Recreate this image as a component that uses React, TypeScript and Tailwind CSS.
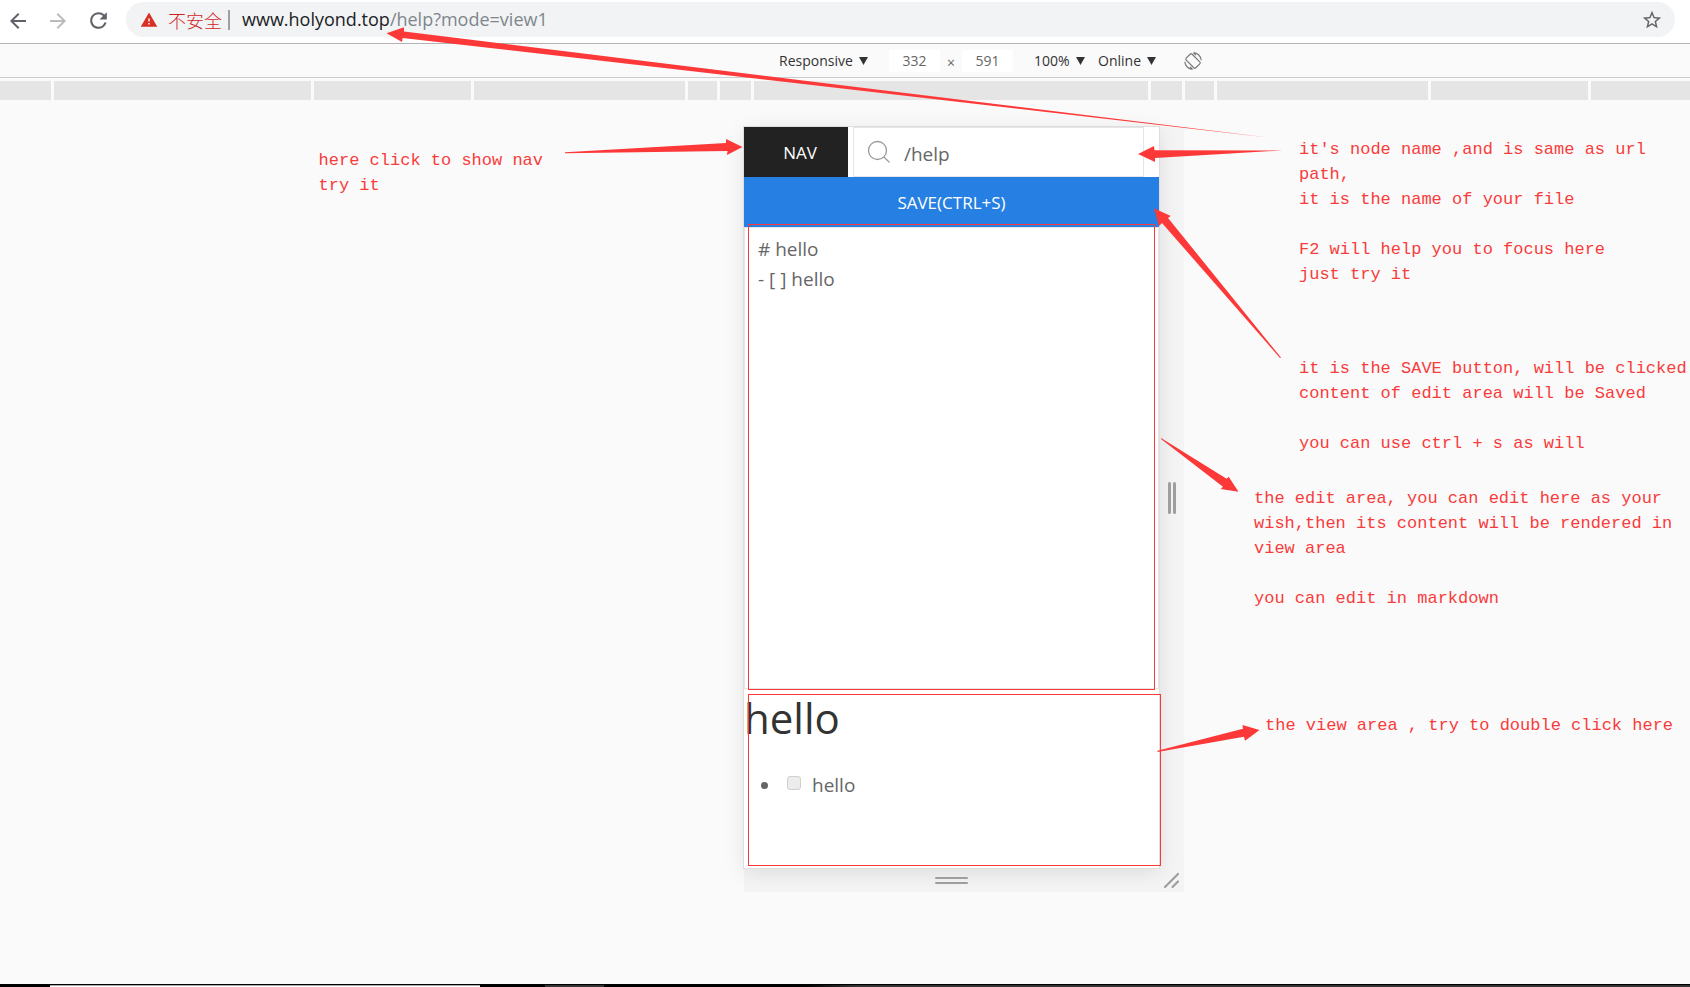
import React from "react";
import { MdArrowBack, MdArrowForward, MdRefresh, MdStarBorder, MdWarning } from "react-icons/md";

function BrowserBar() {
  return (
    <header className="flex h-11 items-start border-b border-[#b4b4b4] bg-white pr-[15px]">
      <nav className="flex w-[126px] shrink-0 items-center gap-4 pl-[6px] pt-2">
        <button aria-label="Back" className="text-[#5f6368]"><MdArrowBack size={24} /></button>
        <button aria-label="Forward" className="text-[#babcbe]"><MdArrowForward size={24} /></button>
        <button aria-label="Reload" className="text-[#5f6368]"><MdRefresh size={25} /></button>
      </nav>
      <div className="mt-[2px] flex h-[35px] flex-1 items-center rounded-full bg-[#f1f3f4] pl-[14px] pr-3">
        <MdWarning size={18} className="shrink-0 text-[#d93025]" />
        <span className="ml-[10px] shrink-0 font-['Noto_Sans_CJK_SC',sans-serif] text-[18px] leading-6 font-light text-[#d21f1f]">不安全</span>
        <span className="ml-[6px] h-5 w-[2px] shrink-0 bg-[#9aa0a6]" />
        <div className="ml-[12px] flex-1 pb-[2px] text-[18px] leading-6 whitespace-nowrap text-[#80868b]">
          <span className="text-[#202124]">www.holyond.top</span>/help?mode=view1
        </div>
        <button aria-label="Bookmark" className="text-[#5f6368]"><MdStarBorder size={22} /></button>
      </div>
    </header>
  );
}

function BarSelect({ label, value, className }: { label: string; value: string; className: string }) {
  return (
    <div className={"flex items-center " + className}>
      <select aria-label={label} className="flex-1 appearance-none bg-transparent text-[14px] leading-5 text-[#333] outline-none">
        <option>{value}</option>
      </select>
      <svg aria-hidden="true" className="h-2 w-[9px] shrink-0" viewBox="0 0 9 8"><path d="M0 0h9L4.500 8z" fill="#333" /></svg>
    </div>
  );
}

function RotateIcon() {
  return (
    <svg className="size-[18px]" viewBox="0 0 18 18" fill="none" stroke="#777" strokeWidth="1.200">
      <rect x="4.800" y="2.200" width="8.400" height="13.600" rx="1.400" transform="rotate(-45 9 9)" />
      <path d="M9.500 0.700a8.200 8.200 0 0 1 7.700 7.500M8.500 17.300A8.200 8.200 0 0 1 0.800 9.800M9.500 0.700l2.500 2.400M8.500 17.300L6 14.900" />
    </svg>
  );
}

function DeviceBar() {
  const field = "h-[22px] bg-white text-center text-[14px] leading-5 text-[#666] outline-none";
  return (
    <div className="flex h-[34px] items-center border-b border-[#ccc] bg-[#fafafa]">
      <div className="flex-[779]" />
      <BarSelect label="Device" value="Responsive" className="w-[89px]" />
      <input aria-label="Width" defaultValue="332" className={field + " ml-[21px] w-[51px]"} />
      <span className="w-[22px] pt-1 text-center text-[14px] leading-5 text-[#666]">×</span>
      <input aria-label="Height" defaultValue="591" className={field + " w-[51px]"} />
      <BarSelect label="Zoom" value="100%" className="ml-[21px] w-[51px]" />
      <BarSelect label="Network" value="Online" className="ml-[13px] w-[58px]" />
      <button aria-label="Rotate" className="ml-7"><RotateIcon /></button>
      <div className="flex-[488]" />
    </div>
  );
}

function Ruler() {
  return (
    <div className="flex h-[22px] gap-[3px] bg-[#fafafa] pt-[3px] *:bg-[#e5e5e5]">
      <div className="flex-[51]" />
      <div className="flex-[257]" />
      <div className="flex-[157]" />
      <div className="flex-[211]" />
      <div className="w-[29px]" />
      <div className="w-[31px]" />
      <div className="w-[394px]" />
      <div className="w-[31px]" />
      <div className="w-[29px]" />
      <div className="flex-[211]" />
      <div className="flex-[157]" />
      <div className="flex-[99]" />
    </div>
  );
}

function Note({ children, className }: { children: string; className: string }) {
  return (
    <p className={"font-['Liberation_Mono',monospace] text-[17px] leading-[25px] whitespace-pre text-[#f83c3c] " + className}>
      {children}
    </p>
  );
}

function Marks() {
  return (
    <svg
      aria-hidden="true"
      className="pointer-events-none absolute top-0 left-0 z-10 h-[765px] w-[440px] overflow-visible"
      viewBox="744 127 440 765"
      fill="#fd3838"
    >
      <g fill="none" stroke="#fd3838">
        <rect x="748.5" y="224.5" width="406" height="465" />
        <rect x="748.5" y="694.5" width="412" height="171" />
      </g>
      <path d="M386.500 33.300L404 27.300L404 31.500L1270 137.700L402.600 38L402 42Z" />
      <path d="M565 152.300L726 143L726 139L742.500 147L727 155L727.500 151L565 153.200Z" />
      <path d="M1282.500 150.400L1154.500 150.300L1154 146L1138 154L1155 162L1155 158Z" />
      <path d="M1154 208.300L1170.700 216L1168 218L1281 357.500L1280 358L1162 223L1159 226Z" />
      <path d="M1161 438L1226.600 478.700L1228.700 476.700L1238.500 491.700L1220.700 489L1223 486.700L1161 439Z" />
      <path d="M1157.500 750.800L1243 728.700L1242.500 725L1259.500 730L1245 740.700L1244 736.700L1157.500 752Z" />
    </svg>
  );
}

function Device() {
  return (
    <section className="relative grid h-[765px] grid-cols-[1fr_25px] grid-rows-[1fr_24px] bg-[#f4f4f4]">
      <div className="flex flex-col bg-white shadow-[0_0_0_1px_#dedede,0_4px_20px_rgba(0,0,0,0.1)]">
        <div className="flex h-[50px]">
          <button className="w-[104px] bg-[#222] pt-[2px] pl-2 text-[17px] text-white">NAV</button>
          <label className="ml-[5px] flex flex-1 items-center border border-[#e5e5e5] pl-[13px]">
            <svg className="size-6 shrink-0" viewBox="0 0 24 24" fill="none" stroke="#999" strokeWidth="1.300">
              <circle cx="10.500" cy="10.500" r="9" />
              <path d="M17 17l5.500 5.500" />
            </svg>
            <input aria-label="Node name" defaultValue="/help" className="ml-[13px] w-0 flex-1 pt-[3px] text-[19px] leading-7 text-[#666] outline-none" />
          </label>
          <div className="w-[15px]" />
        </div>
        <button className="h-[50px] bg-[#267fe2] pt-[2px] text-[17px] text-white">SAVE(CTRL+S)</button>
        <textarea
          aria-label="Edit area"
          defaultValue={"# hello\n- [ ] hello"}
          className="h-[462px] resize-none border border-[#e5e5e5] px-[13px] py-[6px] text-[19px] leading-[30px] text-[#666] outline-none"
        />
        <article className="pt-[3px]">
          <h1 className="text-[42px] leading-[52px] text-[#333]">hello</h1>
          <ul className="mt-[26px] pl-[17px]">
            <li className="flex h-[30px] items-center">
              <span className="size-[7px] rounded-full bg-[#666]" />
              <label className="ml-[19px] flex items-center gap-[11px] text-[19px] leading-[30px] text-[#666]">
                <input type="checkbox" disabled className="mb-1 size-[14px] appearance-none rounded-[3px] border border-[#d0d0d0] bg-[#ececec]" />
                hello
              </label>
            </li>
          </ul>
        </article>
      </div>
      <div className="flex items-center justify-center gap-[2px]">
        <span className="h-8 w-[3px] rounded-xs bg-[#9e9e9e]" />
        <span className="h-8 w-[3px] rounded-xs bg-[#9e9e9e]" />
      </div>
      <div className="flex flex-col items-center justify-center gap-[3px]">
        <span className="h-[2px] w-[33px] rounded-xs bg-[#9e9e9e]" />
        <span className="h-[2px] w-[33px] rounded-xs bg-[#9e9e9e]" />
      </div>
      <svg className="size-6" viewBox="0 0 24 24" stroke="#9e9e9e" strokeWidth="2.200" strokeLinecap="round">
        <path d="M6 19L19 6M13.500 19L19 13.500" />
      </svg>
      <Marks />
    </section>
  );
}

export default function App() {
  return (
    <div className="flex min-h-screen flex-col overflow-hidden bg-[#fafafa] font-['Open_Sans','Noto_Sans_CJK_SC',sans-serif]">
      <BrowserBar />
      <DeviceBar />
      <Ruler />
      <main className="grid flex-1 grid-cols-[744fr_440px_506fr] items-start pt-[27px]">
        <aside className="flex justify-end pt-[21px] pr-[201px]">
          <Note className="">{"here click to show nav\ntry it"}</Note>
        </aside>
        <Device />
        <aside className="flex w-0 flex-col items-start pt-[10px]">
          <Note className="ml-[115px]">{"it's node name ,and is same as url\npath,\nit is the name of your file\n\nF2 will help you to focus here\njust try it"}</Note>
          <Note className="mt-[69px] ml-[115px]">{"it is the SAVE button, will be clicked\ncontent of edit area will be Saved\n\nyou can use ctrl + s as will"}</Note>
          <Note className="mt-[30px] ml-[70px]">{"the edit area, you can edit here as your\nwish,then its content will be rendered in\nview area\n\nyou can edit in markdown"}</Note>
          <Note className="mt-[102px] ml-[81px]">{"the view area , try to double click here"}</Note>
        </aside>
      </main>
      <footer className="flex h-[3px] border-t border-black bg-black">
        <div className="flex-[50]" />
        <div className="flex-[430] border-t border-[#aaa] bg-white" />
        <div className="flex-[65]" />
        <div className="flex-[59] bg-[#333]" />
        <div className="flex-[180]" />
        <div className="flex-[70] bg-linear-to-r from-black to-[#333]" />
        <div className="flex-[836] bg-[#333]" />
      </footer>
    </div>
  );
}
